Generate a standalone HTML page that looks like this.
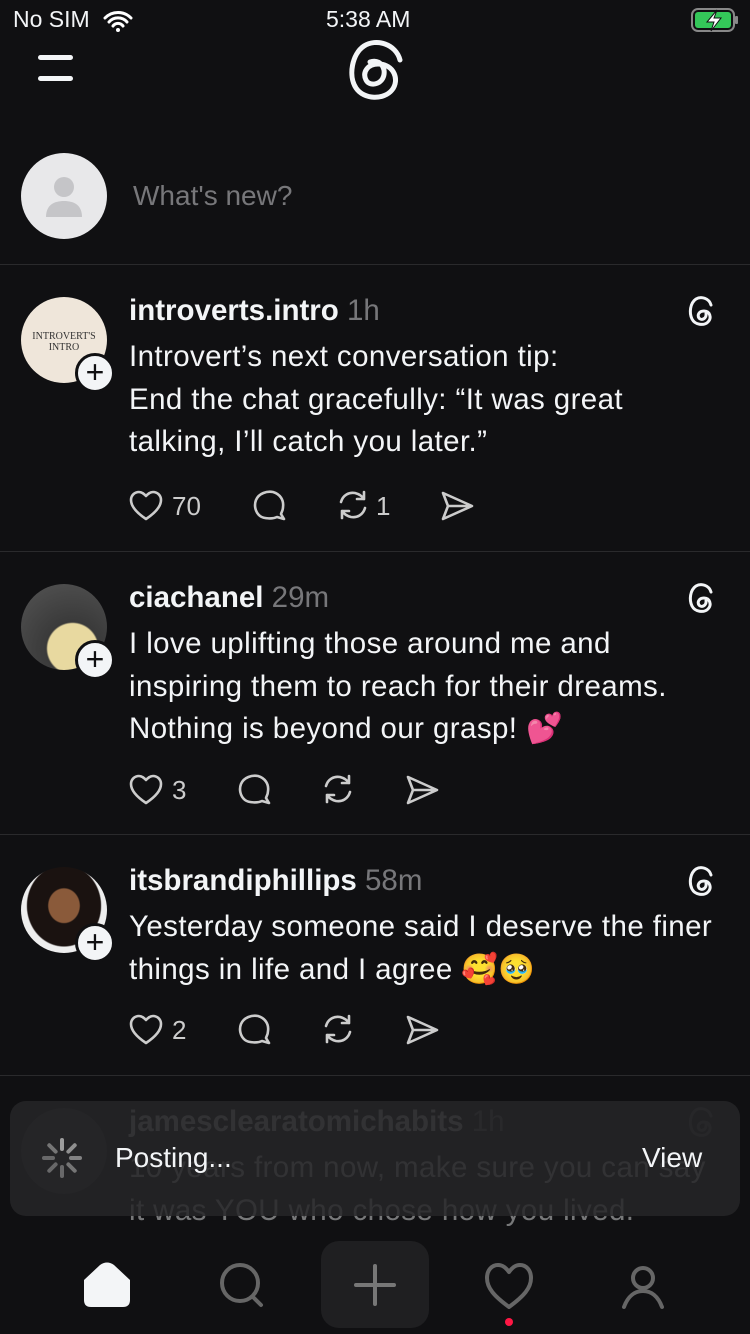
<!DOCTYPE html>
<html><head><meta charset="utf-8"><style>
*{margin:0;padding:0;box-sizing:border-box}
body{width:750px;height:1334px;background:#101012;color:#f3f5f7;font-family:"Liberation Sans",sans-serif;position:relative;overflow:hidden}
.a{position:absolute;white-space:nowrap}
.sep{position:absolute;left:0;width:750px;height:1px;background:#2a2a2c}
.name{font-size:29.5px;font-weight:bold;line-height:34px}
.name span{font-weight:normal;color:#77777a}
.txt{font-size:29.5px;line-height:42.5px;letter-spacing:0.4px}
.av{position:absolute;left:21px;width:86px;height:86px;border-radius:50%;overflow:hidden}
.plus{position:absolute;width:40px;height:40px;border-radius:50%;background:#f3f5f7;border:3px solid #101012;color:#101012;font-size:32px;line-height:32px;text-align:center;font-weight:normal}
.cnt{font-size:26px;color:#ccc}
svg{position:absolute}
</style></head><body>
<!-- status -->
<div class="a" style="left:13px;top:6px;font-size:23px">No SIM</div>
<svg style="left:102px;top:10px" width="32" height="22" viewBox="0 0 32 22"><path d="M3 8a18 18 0 0 1 26 0M7 12a12 12 0 0 1 18 0M11 16a6 6 0 0 1 10 0" stroke="#fff" stroke-width="3" fill="none" stroke-linecap="round"/><circle cx="16" cy="20" r="2" fill="#fff"/></svg>
<div class="a" style="left:326px;top:6px;font-size:23px">5:38 AM</div>
<svg style="left:690px;top:7px" width="50" height="26" viewBox="0 0 50 26"><rect x="2" y="2" width="42" height="22" rx="6" fill="none" stroke="#888" stroke-width="2"/><rect x="5" y="5" width="36" height="16" rx="3" fill="#34c759"/><rect x="45" y="9" width="3" height="8" rx="1" fill="#888"/><path d="M27 3L17 15h7l-3 9 10-13h-7z" fill="#fff" stroke="#101012" stroke-width="1"/></svg>
<!-- header -->
<div class="a" style="left:38px;top:55px;width:35px;height:5px;border-radius:3px;background:#f3f5f7"></div>
<div class="a" style="left:38px;top:76px;width:35px;height:5px;border-radius:3px;background:#f3f5f7"></div>
<svg style="left:340px;top:34px" width="70" height="70" viewBox="0 0 70 70"><path d="M60 26C56 10 36 4 24 12C12 20 8 42 16 54C24 66 44 66 52 56C60 46 54 30 38 30C28 30 22 38 26 46C30 54 46 50 44 36C42 28 36 26 30 28" fill="none" stroke="#f3f5f7" stroke-width="5" stroke-linecap="round"/></svg>
<!-- composer -->
<div class="av" style="top:153px;background:#e8e8ea"><svg style="left:23px;top:22px" width="40" height="44" viewBox="0 0 40 44"><circle cx="20" cy="12" r="10" fill="#c5c5c8"/><path d="M2 42c0-12 8-16 18-16s18 4 18 16z" fill="#c5c5c8"/></svg></div>
<div class="a" style="left:133px;top:180px;font-size:28px;color:#77777a">What's new?</div>
<div class="sep" style="top:264px"></div>

<!-- post1 -->
<div class="av" style="top:297px;background:#efe6da;color:#333;font-family:'Liberation Serif',serif;font-size:10px;text-align:center;padding-top:34px;line-height:11px">INTROVERT'S<br>INTRO</div>
<div class="plus" style="left:75px;top:353px">+</div>
<div class="a name" style="left:129px;top:294px">introverts.intro <span>1h</span></div>
<div class="a txt" style="left:129px;top:336px">Introvert’s next conversation tip:<br>End the chat gracefully: “It was great<br>talking, I’ll catch you later.”</div>

<!-- post2 -->
<div class="sep" style="top:551px"></div>
<div class="av" style="top:584px;background:radial-gradient(circle at 60% 75%,#e8d9a0 0 30%,#3a3a3a 32%,#555 100%)"></div>
<div class="plus" style="left:75px;top:640px">+</div>
<div class="a name" style="left:129px;top:581px">ciachanel <span>29m</span></div>
<div class="a txt" style="left:129px;top:623px">I love uplifting those around me and<br>inspiring them to reach for their dreams.<br>Nothing is beyond our grasp! <span style="color:#f06">💕</span></div>

<!-- post3 -->
<div class="sep" style="top:834px"></div>
<div class="av" style="top:867px;background:radial-gradient(ellipse at 50% 45%,#8a5a3a 0 25%,#1a1210 27% 60%,#eee 62%)"></div>
<div class="plus" style="left:75px;top:923px">+</div>
<div class="a name" style="left:129px;top:864px">itsbrandiphillips <span>58m</span></div>
<div class="a txt" style="left:129px;top:906px">Yesterday someone said I deserve the finer<br>things in life and I agree 🥰🥹</div>

<!-- post4 faded -->
<div class="sep" style="top:1075px"></div>
<div class="av" style="top:1108px;background:#3a3a3c"></div>
<div class="a name" style="left:129px;top:1105px">jamesclearatomichabits <span>1h</span></div>
<div class="a txt" style="left:129px;top:1147px">10 years from now, make sure you can say<br>it was YOU who chose how you lived.</div>

<!-- action rows & thread icons -->
<svg style="left:0;top:0" width="750" height="1334" viewBox="0 0 750 1334">
<defs>
<g id="th"><path d="M24 9C22 2 14 0 9 3C3 7 2 17 5 23C8 29 17 30 21 26C25 22 23 15 17 15C12 15 10 19 12 22C14 25 20 23 19 17" fill="none" stroke="#f3f5f7" stroke-width="3" stroke-linecap="round"/></g>
<g id="hrt"><path d="M16 28C4 20 1 14 1 9C1 4 5 1 9 1C12 1 14 3 16 5C18 3 20 1 23 1C27 1 31 4 31 9C31 14 28 20 16 28Z" fill="none" stroke="#ccc" stroke-width="2.6" stroke-linejoin="round"/></g>
<g id="cm"><path d="M24 27C20 29 11 29 7 26C2 22 1 15 3 10C6 3 14 1 20 2C27 4 31 10 30 17C30 21 28 23 28 24L31 29Z" fill="none" stroke="#ccc" stroke-width="2.6" stroke-linejoin="round"/></g>
<g id="rp"><path d="M4 12C6 5 12 2 18 3C22 4 25 6 27 9M27 2V9H20M28 18C26 25 20 28 14 27C10 26 7 24 5 21M5 28V21H12" fill="none" stroke="#ccc" stroke-width="2.6" stroke-linecap="round" stroke-linejoin="round"/></g>
<g id="sh"><path d="M2 2L31 15L2 28L7 15Z M7 15H31" fill="none" stroke="#ccc" stroke-width="2.6" stroke-linejoin="round"/></g>
</defs>
<use href="#th" x="687" y="296"/><use href="#th" x="687" y="583"/><use href="#th" x="687" y="866"/><use href="#th" x="687" y="1107" opacity=".3"/>
<use href="#hrt" x="130" y="491"/><use href="#cm" x="253" y="490"/><use href="#rp" x="337" y="490"/><use href="#sh" x="441" y="491"/>
<use href="#hrt" x="130" y="775"/><use href="#cm" x="238" y="774"/><use href="#rp" x="322" y="774"/><use href="#sh" x="406" y="775"/>
<use href="#hrt" x="130" y="1015"/><use href="#cm" x="238" y="1014"/><use href="#rp" x="322" y="1014"/><use href="#sh" x="406" y="1015"/>
</svg>
<div class="a cnt" style="left:172px;top:491px">70</div><div class="a cnt" style="left:376px;top:491px">1</div>
<div class="a cnt" style="left:172px;top:775px">3</div>
<div class="a cnt" style="left:172px;top:1015px">2</div>

<!-- fade overlay over post4 -->
<div class="a" style="left:0;top:1090px;width:750px;height:150px;background:rgba(16,16,18,0.55)"></div>
<!-- toast -->
<div class="a" style="left:10px;top:1101px;width:730px;height:115px;border-radius:16px;background:rgba(38,38,40,0.85)"></div>
<svg style="left:40px;top:1136px" width="44" height="44" viewBox="-22 -22 44 44" stroke-width="4" stroke-linecap="round">
<g stroke="#aaa"><line x1="0" y1="-18" x2="0" y2="-9" opacity=".9"/><line x1="0" y1="-18" x2="0" y2="-9" transform="rotate(45)" opacity=".8"/><line x1="0" y1="-18" x2="0" y2="-9" transform="rotate(90)" opacity=".7"/><line x1="0" y1="-18" x2="0" y2="-9" transform="rotate(135)" opacity=".6"/><line x1="0" y1="-18" x2="0" y2="-9" transform="rotate(180)" opacity=".5"/><line x1="0" y1="-18" x2="0" y2="-9" transform="rotate(225)" opacity=".5"/><line x1="0" y1="-18" x2="0" y2="-9" transform="rotate(270)" opacity=".5"/><line x1="0" y1="-18" x2="0" y2="-9" transform="rotate(315)" opacity=".6"/></g></svg>
<div class="a" style="left:115px;top:1142px;font-size:28px">Posting...</div>
<div class="a" style="left:642px;top:1142px;font-size:28px">View</div>

<!-- tab bar -->
<svg style="left:0;top:1230px" width="750" height="104" viewBox="0 1230 750 104">
<path d="M84 1280L100 1265Q107 1260 114 1265L130 1280V1300Q130 1307 123 1307H91Q84 1307 84 1300Z" fill="#f3f5f7"/>
<circle cx="240" cy="1283" r="18" fill="none" stroke="#666" stroke-width="4"/><line x1="253" y1="1297" x2="261" y2="1305" stroke="#666" stroke-width="4" stroke-linecap="round"/>
<rect x="321" y="1241" width="108" height="87" rx="18" fill="#1f1f21"/>
<path d="M375 1266V1304M356 1285H394" stroke="#777" stroke-width="4" stroke-linecap="round"/>
<path d="M509 1307C494 1296 487 1288 487 1278C487 1270 492 1265 498 1265C503 1265 506 1268 509 1272C512 1268 515 1265 520 1265C526 1265 531 1270 531 1278C531 1288 524 1296 509 1307Z" fill="none" stroke="#666" stroke-width="4" stroke-linejoin="round"/>
<circle cx="509" cy="1322" r="4" fill="#ff1744"/>
<circle cx="643" cy="1278" r="10" fill="none" stroke="#666" stroke-width="4"/><path d="M624 1307C628 1296 635 1291 643 1291C651 1291 658 1296 662 1307" fill="none" stroke="#666" stroke-width="4" stroke-linecap="round"/>
</svg>
</body></html>
